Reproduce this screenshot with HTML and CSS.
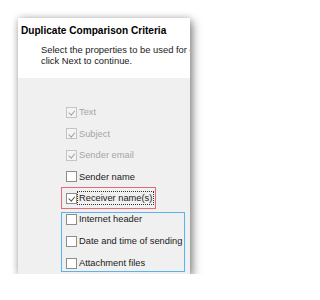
FILE: index.html
```html
<!DOCTYPE html>
<html>
<head>
<meta charset="utf-8">
<link rel="stylesheet" href="styles.css">
</head>
<body>
<div class="window">
  <div class="header">
    <div class="title">Duplicate Comparison Criteria</div>
    <div class="subtitle">Select the properties to be used for comparison.<br>click Next to continue.</div>
  </div>
  <div class="panel">
    <div class="list">
      <div class="row disabled"><span class="box checked"></span><span class="label">Text</span></div>
      <div class="row disabled"><span class="box checked"></span><span class="label">Subject</span></div>
      <div class="row disabled"><span class="box checked"></span><span class="label">Sender email</span></div>
      <div class="row"><span class="box"></span><span class="label">Sender name</span></div>
      <div class="group red">
        <div class="row"><span class="box checked"></span><span class="label focus">Receiver name(s)</span></div>
      </div>
      <div class="group blue">
        <div class="row"><span class="box"></span><span class="label">Internet header</span></div>
        <div class="row"><span class="box"></span><span class="label">Date and time of sending</span></div>
        <div class="row"><span class="box"></span><span class="label">Attachment files</span></div>
      </div>
    </div>
  </div>
</div>
</body>
</html>
```
FILE: styles.css
```css
html, body {
  margin: 0;
  padding: 0;
  background: #ffffff;
}
body {
  font-family: "Liberation Sans", Arial, sans-serif;
  color: #1a1a1a;
}
.window {
  margin: 18px 0 0 18px;
  width: 172px;
  height: 256px;
  overflow: hidden;
  background: #f0f0f0;
  box-shadow: 0 0 7px rgba(0,0,0,0.22), 3px 4px 9px rgba(0,0,0,0.4);
}
.header {
  background: #ffffff;
  height: 60px;
  padding: 6.5px 0 0 3px;
  box-sizing: border-box;
}
.title {
  font-weight: bold;
  font-size: 10.1px;
  line-height: 12px;
  color: #000;
  white-space: nowrap;
}
.subtitle {
  margin: 7.75px 0 0 20px;
  font-size: 9.4px;
  line-height: 11px;
  color: #1a1a1a;
  white-space: nowrap;
}
.panel {
  padding: 28px 0 0 43px;
}
.list {
  display: flex;
  flex-direction: column;
  gap: 9.5px;
}
.row {
  display: flex;
  align-items: center;
  height: 12px;
  font-size: 9.3px;
  white-space: nowrap;
}
.box {
  flex: none;
  width: 11px;
  height: 11px;
  box-sizing: border-box;
  border: 1px solid #8c8c8c;
  background: #ffffff;
  margin-left: 5px;
  margin-right: 1px;
  position: relative;
}
.box.checked::after {
  content: "";
  position: absolute;
  left: 2.5px;
  top: 1.5px;
  width: 2.5px;
  height: 4.5px;
  border: solid #555;
  border-width: 0 1.2px 1.2px 0;
  transform: rotate(40deg);
}
.label {
  padding: 1px 1px;
}
.disabled {
  color: #a6a6a6;
}
.disabled .box {
  border-color: #c4c4c4;
  background: #f4f4f4;
}
.disabled .box.checked::after {
  border-color: #a0a0a0;
}
.focus {
  border: 1px dotted #333;
  padding: 1px 1px;
  margin-left: -1px;
}
.group {
  display: flex;
  flex-direction: column;
  gap: 10px;
}
.red {
  width: 95px;
  box-sizing: border-box;
  border: 1px solid #e46a78;
  padding: 4px 0;
  margin-top: -5px;
}
.blue {
  width: 124px;
  box-sizing: border-box;
  border: 1px solid #5ab4ea;
  padding: 0 0 2px 0;
  margin-top: -6.5px;
}
.group .box {
  margin-left: 4px;
}
```
